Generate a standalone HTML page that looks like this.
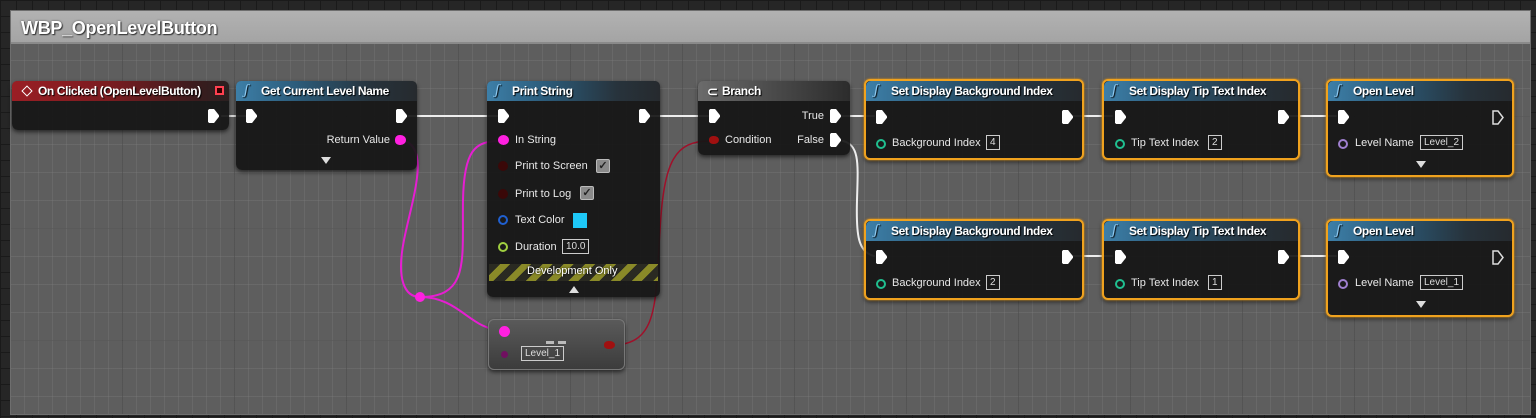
<!DOCTYPE html>
<html><head><meta charset="utf-8">
<style>
*{margin:0;padding:0;box-sizing:border-box}
body{width:1536px;height:418px;overflow:hidden;background:#262626;font-family:"Liberation Sans",sans-serif;position:relative;
background-image:linear-gradient(90deg,#1a1a1a 1px,transparent 1px),linear-gradient(#1a1a1a 1px,transparent 1px);background-size:16px 16px,16px 16px}
.abs{position:absolute}
#comment{left:10px;top:10px;width:1521px;height:405px;background:#5e5e5e;border:1px solid #6e6e6e;
background-image:linear-gradient(90deg,rgba(45,45,45,.35) 1px,transparent 1px),linear-gradient(rgba(45,45,45,.25) 1px,transparent 1px),linear-gradient(90deg,rgba(125,125,125,.3) 1px,transparent 1px),linear-gradient(rgba(125,125,125,.35) 1px,transparent 1px);
background-size:112px 112px,112px 112px,14px 14px,28px 28px;background-position:-1px -7px}
#chead{left:11px;top:11px;width:1519px;height:33px;background:linear-gradient(#b2b2b2,#a4a4a4);border-bottom:2px solid #8a8a8a}
#chead span{position:absolute;left:10px;top:7px;font-size:18px;font-weight:bold;color:#fff;text-shadow:1px 1px 1px #333,0 0 2px #555;letter-spacing:-0.3px}
.node{position:absolute;background:rgba(22,22,22,.93);border-radius:6px;box-shadow:0 2px 4px rgba(0,0,0,.6);color:#e6e6e6;font-size:11px}
.sel{border:2px solid #f0a21e;box-shadow:0 0 2px #f0a21e,0 2px 4px rgba(0,0,0,.6)}
.hd{position:absolute;left:0;top:0;right:0;height:20px;border-radius:5px 5px 0 0;color:#fff;font-size:12px;padding:3px 0 0 25px;text-shadow:1px 1px 1px #000;white-space:nowrap;font-weight:bold;letter-spacing:-0.4px}
.blue{background:linear-gradient(90deg,#3d7fa8,#2b5a78 35%,#27333c 75%,#262a2e)}
.red{background:linear-gradient(90deg,#9a1e24,#7a1c20 45%,#3a1c1e 85%,#2a2020)}
.gray{background:linear-gradient(90deg,#6b6b6b,#4a4a4a 50%,#2c2c2c)}
.fx{position:absolute;left:8px;top:1px;font-style:italic;font-family:"Liberation Serif",serif;font-size:15px;color:#8cc8f0;font-weight:normal}
.ex{position:absolute;width:11px;height:14px;background:#fff;clip-path:polygon(0 8%,10% 0,55% 0,100% 45%,100% 55%,55% 100%,10% 100%,0 92%)}
.t{position:absolute;white-space:nowrap;font-size:11px;color:#e8e8e8}
.dp{position:absolute;width:10px;height:10px;border-radius:50%}
.box{position:absolute;border:1px solid #ccc;height:15px;font-size:10px;color:#ddd;padding:1px 3px;white-space:nowrap}
.tri{position:absolute;width:0;height:0;border-left:5px solid transparent;border-right:5px solid transparent;border-top:7px solid #ddd}
.chk{position:absolute;width:14px;height:14px;background:#8a8a8a;border:1px solid #bbb;border-radius:2px;color:#222;font-size:11px;line-height:12px;text-align:center;font-weight:bold}
</style></head><body>
<div id="comment" class="abs"></div>
<div id="chead" class="abs"><span>WBP_OpenLevelButton</span></div>

<svg class="abs" style="left:0;top:0" width="1536" height="418">
 <g fill="none" stroke-linecap="round">
  <path d="M222 116 L248 116" stroke="#ddd" stroke-width="2"/>
  <path d="M408 116 L498 116" stroke="#eee" stroke-width="2"/>
  <path d="M650 116 L708 116" stroke="#eee" stroke-width="2"/>
  <path d="M840 116 L874 116" stroke="#eee" stroke-width="2"/>
  <path d="M1072 116 L1112 116" stroke="#eee" stroke-width="2"/>
  <path d="M1290 116 L1336 116" stroke="#eee" stroke-width="2"/>
  <path d="M1072 256 L1112 256" stroke="#eee" stroke-width="2"/>
  <path d="M1290 256 L1336 256" stroke="#eee" stroke-width="2"/>
  <path d="M843 141 C860 145,858 165,857 200 C856 235,858 252,874 256" stroke="#eee" stroke-width="2"/>
  <path d="M405 141 C430 150,412 200,404 240 C396 280,405 297,420 297" stroke="#e61ed2" stroke-width="2"/>
  <path d="M420 297 C470 297,462 260,463 200 C464 150,475 141,500 141" stroke="#e61ed2" stroke-width="2"/>
  <path d="M420 297 C460 297,470 330,502 330" stroke="#e61ed2" stroke-width="2"/>
  <path d="M612 345 C660 345,655 300,660 230 C664 160,675 141,710 141" stroke="#a0102a" stroke-width="1.5"/>
 </g>
 <circle cx="420" cy="297" r="5" fill="#ff20e0"/>
</svg>

<!-- On Clicked -->
<div class="node" style="left:12px;top:81px;width:217px;height:49px">
 <div class="hd red" style="padding-left:26px">On Clicked (OpenLevelButton)</div>
 <div class="abs" style="left:11px;top:6px;width:8px;height:8px;border:1.5px solid #fff;transform:rotate(45deg)"></div>
 <div class="abs" style="left:203px;top:5px;width:9px;height:9px;border:2px solid #ff4050;background:#300"></div>
 <div class="ex" style="left:196px;top:28px"></div>
</div>

<!-- Get Current Level Name -->
<div class="node" style="left:236px;top:81px;width:181px;height:89px">
 <div class="hd blue"><span class="fx">ʃ</span>Get Current Level Name</div>
 <div class="ex" style="left:10px;top:28px"></div>
 <div class="ex" style="left:160px;top:28px"></div>
 <div class="t" style="right:27px;top:53px">Return Value</div>
 <div class="dp" style="left:159px;top:54px;width:11px;background:#ff20e0;border-radius:50% 60% 60% 50%"></div>
 <div class="tri" style="left:85px;top:76px"></div>
</div>

<!-- Print String -->
<div class="node" style="left:487px;top:81px;width:173px;height:216px">
 <div class="hd blue"><span class="fx">ʃ</span>Print String</div>
 <div class="ex" style="left:11px;top:28px"></div>
 <div class="ex" style="left:152px;top:28px"></div>
 <div class="dp" style="left:11px;top:54px;width:11px;background:#ff20e0"></div><div class="t" style="left:28px;top:53px">In String</div>
 <div class="dp" style="left:11px;top:80px;background:#3a0808"></div><div class="t" style="left:28px;top:79px">Print to Screen</div><div class="chk" style="left:109px;top:78px">✓</div>
 <div class="dp" style="left:11px;top:108px;background:#3a0808"></div><div class="t" style="left:28px;top:107px">Print to Log</div><div class="chk" style="left:93px;top:105px">✓</div>
 <div class="dp" style="left:11px;top:134px;border:2px solid #2060d0"></div><div class="t" style="left:28px;top:133px">Text Color</div><div class="abs" style="left:86px;top:132px;width:14px;height:15px;background:#1ec8f8"></div>
 <div class="dp" style="left:11px;top:161px;border:2px solid #a0d040"></div><div class="t" style="left:28px;top:160px">Duration</div><div class="box" style="left:75px;top:158px">10.0</div>
 <div class="abs" style="left:2px;top:183px;width:169px;height:17px;background:repeating-linear-gradient(135deg,#2a2a22 0 8px,#8a8a28 8px 15px)"></div>
 <div class="t" style="left:40px;top:184px;color:#fff;text-shadow:0 0 2px #000">Development Only</div>
 <div class="tri" style="left:82px;top:205px;border-top:none;border-bottom:7px solid #ddd"></div>
</div>

<!-- Select node -->
<div class="node" style="left:488px;top:319px;width:137px;height:51px;background:linear-gradient(#5a5a5a,#3c3c3c);border:1px solid #777">
 <div class="dp" style="left:10px;top:6px;width:11px;height:11px;background:#ff20e0"></div>
 <div class="abs" style="left:57px;top:21px;width:8px;height:3px;background:#bbb"></div><div class="abs" style="left:69px;top:21px;width:8px;height:3px;background:#bbb"></div>
 <div class="dp" style="left:12px;top:31px;width:7px;height:7px;background:#701060"></div>
 <div class="box" style="left:32px;top:26px">Level_1</div>
 <div class="abs" style="left:115px;top:21px;width:11px;height:8px;background:#a01010;border-radius:50% 60% 60% 50%"></div>
</div>

<!-- Branch -->
<div class="node" style="left:698px;top:81px;width:152px;height:74px">
 <div class="hd gray" style="padding-left:24px"><span class="abs" style="left:9px;top:3px;font-size:13px">⊂</span>Branch</div>
 <div class="ex" style="left:11px;top:28px"></div>
 <div class="t" style="right:26px;top:29px">True</div><div class="ex" style="left:132px;top:28px"></div>
 <div class="abs" style="left:11px;top:55px;width:10px;height:8px;background:#a01010;border-radius:50% 60% 60% 50%"></div>
 <div class="t" style="left:27px;top:53px">Condition</div>
 <div class="t" style="right:26px;top:53px">False</div><div class="ex" style="left:132px;top:52px"></div>
</div>

<!-- Row nodes -->
<div class="node sel" style="left:864px;top:79px;width:220px;height:81px">
 <div class="hd blue"><span class="fx">ʃ</span>Set Display Background Index</div>
 <div class="ex" style="left:10px;top:29px"></div><div class="ex" style="left:196px;top:29px"></div>
 <div class="dp" style="left:10px;top:58px;border:2px solid #20c090"></div><div class="t" style="left:26px;top:56px">Background Index</div><div class="box" style="left:120px;top:54px">4</div>
</div>
<div class="node sel" style="left:1102px;top:79px;width:198px;height:81px">
 <div class="hd blue"><span class="fx">ʃ</span>Set Display Tip Text Index</div>
 <div class="ex" style="left:11px;top:29px"></div><div class="ex" style="left:174px;top:29px"></div>
 <div class="dp" style="left:11px;top:58px;border:2px solid #20c090"></div><div class="t" style="left:27px;top:56px">Tip Text Index</div><div class="box" style="left:104px;top:54px">2</div>
</div>
<div class="node sel" style="left:1326px;top:79px;width:188px;height:98px">
 <div class="hd blue"><span class="fx">ʃ</span>Open Level</div>
 <div class="ex" style="left:10px;top:29px"></div>
 <svg class="abs" style="left:164px;top:29px" width="12" height="15"><path d="M1 1H6L11 7.5L6 14H1Z" fill="none" stroke="#ddd" stroke-width="1.5"/></svg>
 <div class="dp" style="left:10px;top:58px;border:2px solid #a080d0"></div><div class="t" style="left:27px;top:56px">Level Name</div><div class="box" style="left:92px;top:54px">Level_2</div>
 <div class="tri" style="left:88px;top:80px"></div>
</div>

<div class="node sel" style="left:864px;top:219px;width:220px;height:81px">
 <div class="hd blue"><span class="fx">ʃ</span>Set Display Background Index</div>
 <div class="ex" style="left:10px;top:29px"></div><div class="ex" style="left:196px;top:29px"></div>
 <div class="dp" style="left:10px;top:58px;border:2px solid #20c090"></div><div class="t" style="left:26px;top:56px">Background Index</div><div class="box" style="left:120px;top:54px">2</div>
</div>
<div class="node sel" style="left:1102px;top:219px;width:198px;height:81px">
 <div class="hd blue"><span class="fx">ʃ</span>Set Display Tip Text Index</div>
 <div class="ex" style="left:11px;top:29px"></div><div class="ex" style="left:174px;top:29px"></div>
 <div class="dp" style="left:11px;top:58px;border:2px solid #20c090"></div><div class="t" style="left:27px;top:56px">Tip Text Index</div><div class="box" style="left:104px;top:54px">1</div>
</div>
<div class="node sel" style="left:1326px;top:219px;width:188px;height:98px">
 <div class="hd blue"><span class="fx">ʃ</span>Open Level</div>
 <div class="ex" style="left:10px;top:29px"></div>
 <svg class="abs" style="left:164px;top:29px" width="12" height="15"><path d="M1 1H6L11 7.5L6 14H1Z" fill="none" stroke="#ddd" stroke-width="1.5"/></svg>
 <div class="dp" style="left:10px;top:58px;border:2px solid #a080d0"></div><div class="t" style="left:27px;top:56px">Level Name</div><div class="box" style="left:92px;top:54px">Level_1</div>
 <div class="tri" style="left:88px;top:80px"></div>
</div>
</body></html>
